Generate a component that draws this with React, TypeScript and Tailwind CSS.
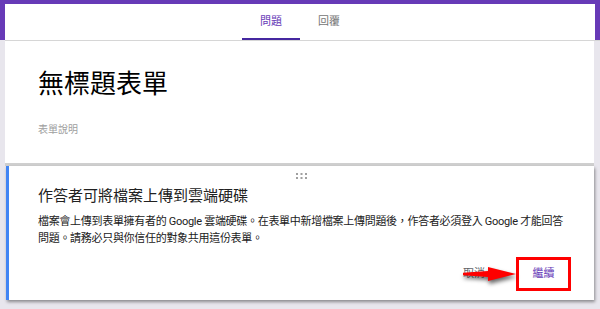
import React from 'react';

function Tab({ active, children }: { active?: boolean; children: React.ReactNode }) {
  return (
    <div
      className={`w-[58px] h-full pt-[2px] flex items-center justify-center text-[11px] border-b-2 ${
        active ? 'text-[#673ab7] border-[#4527a0]' : 'text-[#757575] border-transparent'
      }`}
    >
      {children}
    </div>
  );
}

function DragHandle() {
  return (
    <svg width="12" height="8" viewBox="0 0 12 8" className="block">
      {[0, 4.5, 9].map((x) =>
        [1, 5].map((y) => <rect key={`${x}-${y}`} x={x} y={y} width="2" height="2" fill="#a0a0a0" />)
      )}
    </svg>
  );
}

export default function App() {
  return (
    <div className="w-[600px] h-[309px] overflow-hidden bg-[#e8e6ed] font-['Roboto','Noto_Sans_CJK_TC',sans-serif]">
      {/* header with tabs */}
      <div className="bg-[#673ab7] pt-[4px] px-[5px]">
        <div className="h-[36px] bg-white flex justify-center">
          <div className="flex">
            <Tab active>問題</Tab>
            <Tab>回覆</Tab>
          </div>
        </div>
      </div>
      <div className="h-px bg-[#d6d6d6] ml-[5px]" />

      {/* form title card */}
      <div className="h-[125px] ml-[5px] mr-[6px] bg-white border-b-[3px] border-[#cfcfcf] pl-[33px] pt-[27px]">
        <div className="text-[26px] leading-[32px] text-black">無標題表單</div>
        <div className="mt-[23px] text-[10px] leading-[14px] text-[#9e9e9e]">表單說明</div>
      </div>

      {/* dialog */}
      <div className="relative h-[134px] ml-[6px] mr-[6px] bg-white border-l-[3px] border-[#4285f4] shadow-[1px_2px_3px_rgba(0,0,0,0.4)]">
        <div className="flex justify-center pt-[6px]">
          <DragHandle />
        </div>
        <div className="pl-[29px] pr-[20px]">
          <div className="mt-[6px] text-[15px] leading-[20px] text-[#212121]">作答者可將檔案上傳到雲端硬碟</div>
          <p className="mt-[7px] text-[11px] leading-[17px] tracking-[-0.3px] text-[#212121] whitespace-nowrap">
            檔案會上傳到表單擁有者的 Google 雲端硬碟。在表單中新增檔案上傳問題後，作答者必須登入 Google 才能回答
            <br />
            問題。請務必只與你信任的對象共用這份表單。
          </p>
        </div>
        <div className="mt-[10px] flex justify-end items-center gap-[31px] pr-[23px]">
          <span className="text-[11px] text-[#5f6368]">取消</span>
          <button className="w-[55px] h-[34px] border-[3px] border-[#ff0000] flex items-center justify-center text-[11px] text-[#673ab7]">
            繼續
          </button>
        </div>

        {/* red annotation arrow */}
        <svg
          width="60"
          height="20"
          viewBox="0 0 60 20"
          className="absolute left-[451px] top-[98px] drop-shadow-[1px_3px_2px_rgba(0,0,0,0.6)]"
        >
          <polygon points="3,8.8 28,7 28,3 56,10 28,17 28,13 3,11.2" fill="#ff0000" />
        </svg>
      </div>
    </div>
  );
}
